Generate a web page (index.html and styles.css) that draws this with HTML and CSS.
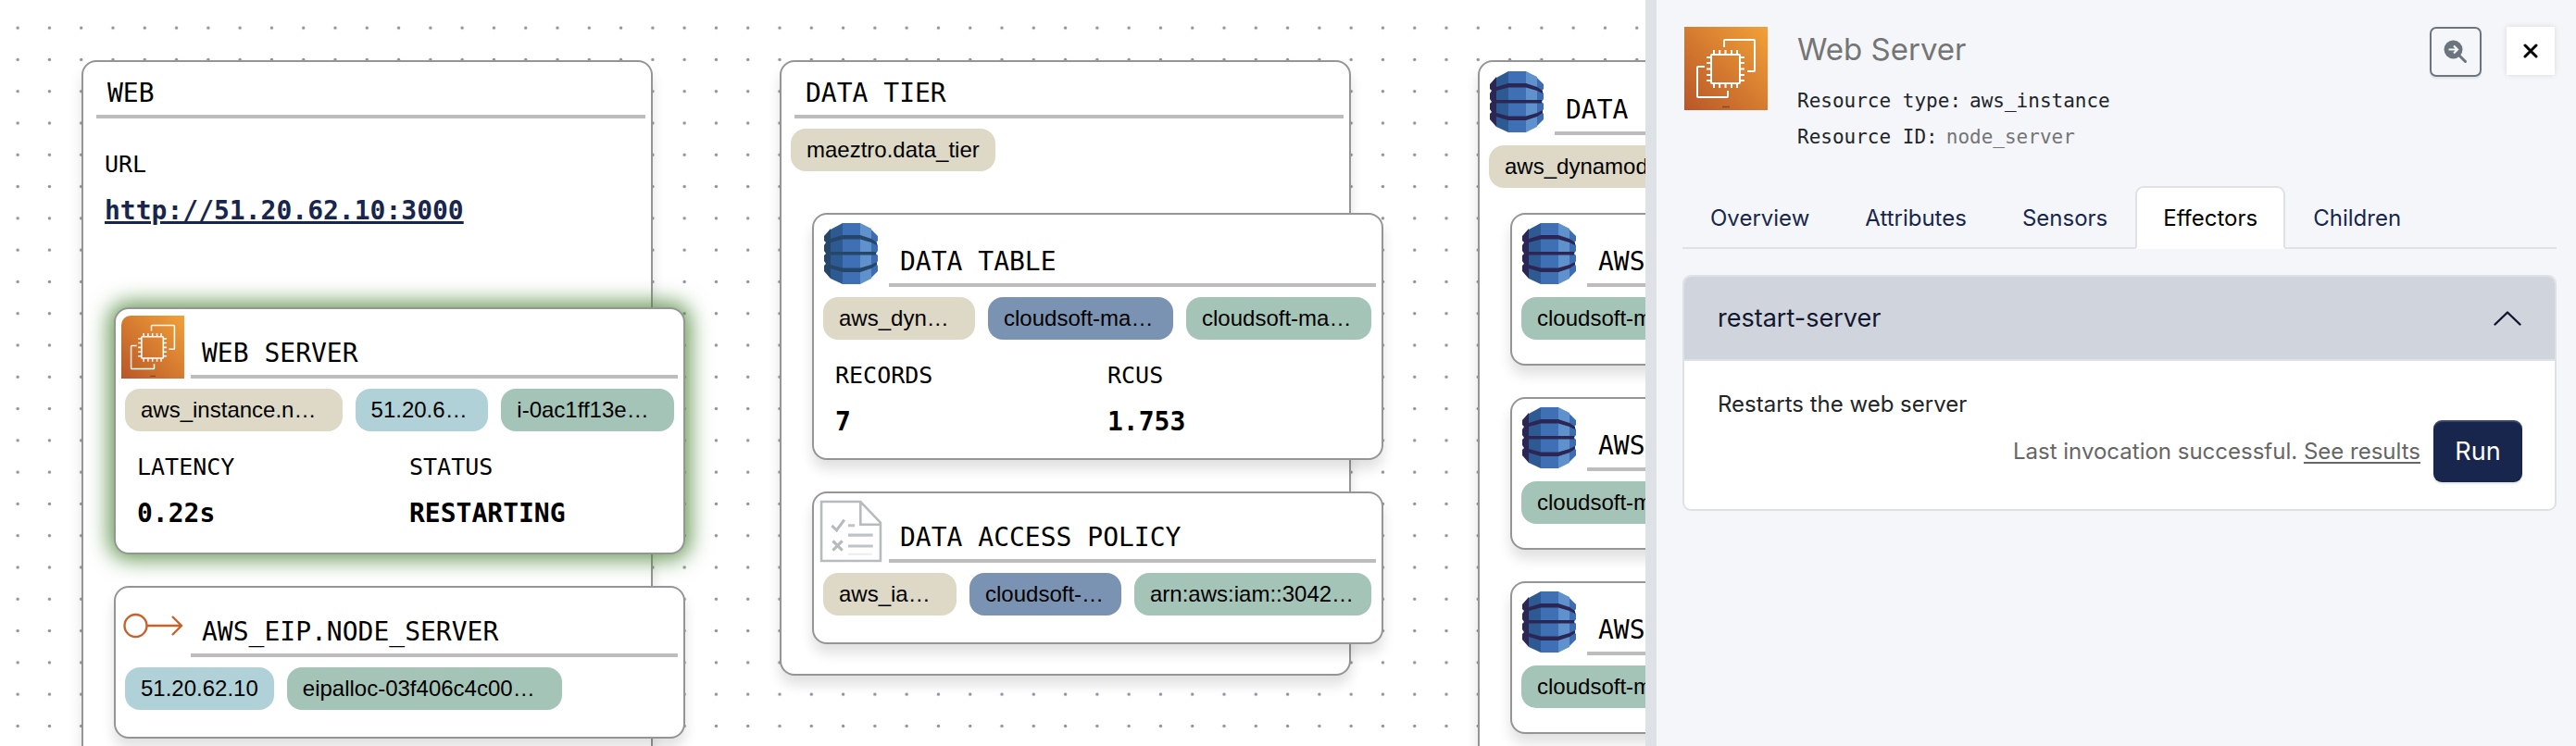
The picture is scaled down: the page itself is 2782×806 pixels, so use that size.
FILE: index.html
```html
<!DOCTYPE html>
<html lang="en">
<head>
<meta charset="utf-8">
<title>Blueprint topology</title>
<link rel="stylesheet" href="styles.css">
</head>
<body>
<svg class="defs" aria-hidden="true">
  <defs>
    <linearGradient id="orange" x1="0" y1="1" x2="1" y2="0">
      <stop offset="0" stop-color="#b95628"/><stop offset="1" stop-color="#f2a138"/>
    </linearGradient>
    <symbol id="ec2" viewBox="0 0 90 90">
      <rect width="90" height="90" fill="url(#orange)"/>
      <g fill="none" stroke="#fff" stroke-width="2">
        <rect x="29" y="30" width="31" height="31" rx="1"/>
        <path d="M32 30v-5M38.200 30v-5M44.500 30v-5M51 30v-5M57 30v-5M32 61v5M38.200 61v5M44.500 61v5M51 61v5M57 61v5M29 33h-5M29 39h-5M29 45.500h-5M29 52h-5M29 58h-5M60 33h5M60 39h5M60 45.500h5M60 52h5M60 58h5"/>
        <path d="M43 22v-7q0-1 1-1h31q1 0 1 1v32q0 1-1 1h-7M22 43h-7q-1 0-1 1v31q0 1 1 1h31q1 0 1-1v-6"/>
      </g>
      <path d="M41 86.500h8" stroke="#8a4a20" stroke-width="1.500"/>
    </symbol>
    <symbol id="dynamo" viewBox="0 0 58 66">
      <path d="M0 14l7-8V60l-7-8V46l2-2-2-3V35l2-2-2-3V24l2-3-2-2z" fill="var(--band)"/>
      <path d="M58 14l-7-7V59l7-7V46l-2-2 2-3V35l-2-2 2-3V24l-2-3 2-2z" fill="#3d6cb0"/>
      <path d="M7 7L20 0V66L7 60z" fill="#2e5a94"/>
      <path d="M20 0H39V66H20z" fill="#3f70b5"/>
      <path d="M39 0L51 6V60L39 66z" fill="#5f91cc"/>
      <path d="M2 20L7 17 20 13H39L51 17 57 21V24L51 21 39 17.500H20L7 21 2 23zM2 31H56V34.500H2zM2 43L7 45 20 48.500H39L51 45 57 42V45L51 49 39 53H20L7 49 2 46z" fill="var(--band)"/>
    </symbol>
    <symbol id="policy" viewBox="0 0 66 66">
      <path d="M2 2H43L64 24V64H2zM43 2V26H64" fill="none" stroke="#b6bbbd" stroke-width="2.500"/>
      <path d="M30 37H56M30 48.500H56M30 27H37" stroke="#c0c3c5" stroke-width="3"/>
      <path d="M30 57H55" stroke="#eceeee" stroke-width="2"/>
      <path d="M13 27l5 5 8-11M14 43l10 10M24 43l-10 10" fill="none" stroke="#b6bbbd" stroke-width="3"/>
    </symbol>
    <symbol id="eip" viewBox="0 0 68 68">
      <g fill="none" stroke="#c9622a" stroke-width="2.400">
        <circle cx="15.500" cy="34" r="12"/><path d="M28 34H65M55 24l10 10-10 10"/>
      </g>
    </symbol>
  </defs>
</svg>
<div class="app">
  <main class="canvas">
    <svg class="grid" aria-hidden="true">
      <defs><pattern id="dots" x="2" y="13" width="34.286" height="34.286" patternUnits="userSpaceOnUse"><circle cx="17.143" cy="17.143" r="1.700" fill="#90909a"/></pattern></defs>
      <rect width="100%" height="100%" fill="url(#dots)"/>
    </svg>

    <section class="node group web">
      <header class="head"><h2 class="title">WEB</h2></header>
      <dl class="url"><dt>URL</dt><dd><a href="#">http://51.20.62.10:3000</a></dd></dl>
      <article class="node card tall selected">
        <header class="head"><svg class="icon rounded"><use href="#ec2"/></svg><h3 class="title">WEB SERVER</h3></header>
        <ul class="pills">
          <li class="pill sand w235">aws_instance.n…</li><li class="pill sky w144">51.20.6…</li><li class="pill mint w187">i-0ac1ff13e…</li>
        </ul>
        <dl class="stats"><div><dt>LATENCY</dt><dd>0.22s</dd></div><div><dt>STATUS</dt><dd>RESTARTING</dd></div></dl>
      </article>
      <article class="node card">
        <header class="head"><svg class="icon"><use href="#eip"/></svg><h3 class="title">AWS_EIP.NODE_SERVER</h3></header>
        <ul class="pills"><li class="pill sky">51.20.62.10</li><li class="pill mint w297">eipalloc-03f406c4c00…</li></ul>
      </article>
    </section>

    <section class="node group data">
      <header class="head"><h2 class="title">DATA TIER</h2></header>
      <ul class="pills"><li class="pill sand">maeztro.data_tier</li></ul>
      <article class="node card table tall">
        <header class="head"><svg class="icon db navy"><use href="#dynamo"/></svg><h3 class="title">DATA TABLE</h3></header>
        <ul class="pills">
          <li class="pill sand w164">aws_dyn…</li><li class="pill blue w200">cloudsoft-ma…</li><li class="pill mint w200">cloudsoft-ma…</li>
        </ul>
        <dl class="stats"><div><dt>RECORDS</dt><dd>7</dd></div><div><dt>RCUS</dt><dd>1.753</dd></div></dl>
      </article>
      <article class="node card">
        <header class="head"><svg class="icon"><use href="#policy"/></svg><h3 class="title">DATA ACCESS POLICY</h3></header>
        <ul class="pills">
          <li class="pill sand w144">aws_ia…</li><li class="pill blue w164">cloudsoft-…</li><li class="pill mint w256">arn:aws:iam::3042…</li>
        </ul>
      </article>
    </section>

    <section class="node group tables">
      <header class="head iconed"><svg class="icon db"><use href="#dynamo"/></svg><h2 class="title">DATA</h2></header>
      <ul class="pills"><li class="pill sand w235">aws_dynamod</li></ul>
      <article class="node card table">
        <header class="head"><svg class="icon db"><use href="#dynamo"/></svg><h3 class="title">AWS</h3></header>
        <ul class="pills"><li class="pill mint w297">cloudsoft-m</li></ul>
      </article>
      <article class="node card table">
        <header class="head"><svg class="icon db"><use href="#dynamo"/></svg><h3 class="title">AWS</h3></header>
        <ul class="pills"><li class="pill mint w297">cloudsoft-m</li></ul>
      </article>
      <article class="node card table">
        <header class="head"><svg class="icon db"><use href="#dynamo"/></svg><h3 class="title">AWS</h3></header>
        <ul class="pills"><li class="pill mint w297">cloudsoft-m</li></ul>
      </article>
    </section>
  </main>

  <aside class="panel">
    <header class="summary">
      <svg class="logo"><use href="#ec2"/></svg>
      <div class="about">
        <h1 class="name">Web Server</h1>
        <p class="meta"><span>Resource type:</span><span>aws_instance</span></p>
        <p class="meta"><span>Resource ID:</span><span class="muted">node_server</span></p>
      </div>
      <div class="actions">
        <button class="zoom" type="button" aria-label="Zoom to node">
          <svg viewBox="0 0 26 26"><path d="M17 17l6.500 6.500" stroke="#6c757d" stroke-width="3" stroke-linecap="round"/><circle cx="10.500" cy="10.500" r="10" fill="#6c757d"/><path d="M5.500 10.500h9M11 6.500l4 4-4 4" fill="none" stroke="#f4f6fa" stroke-width="2.200"/></svg>
        </button>
        <button class="close" type="button" aria-label="Close">
          <svg viewBox="0 0 16 16"><path d="M2 2l12 12M14 2L2 14" stroke="#000" stroke-width="3" stroke-linecap="round"/></svg>
        </button>
      </div>
    </header>
    <nav class="tabs">
      <a class="tab" href="#">Overview</a><a class="tab" href="#">Attributes</a><a class="tab" href="#">Sensors</a><a class="tab active" href="#">Effectors</a><a class="tab" href="#">Children</a>
    </nav>
    <section class="accordion">
      <button class="toggle" type="button"><span>restart-server</span>
        <svg viewBox="0 0 30 16"><path d="M1.500 14.500L15 1.500l13.500 13" fill="none" stroke="#10172e" stroke-width="2.400" stroke-linecap="round" stroke-linejoin="round"/></svg>
      </button>
      <div class="body">
        <p class="text">Restarts the web server</p>
        <div class="run-row"><span>Last invocation successful. <a href="#">See results</a></span><button class="run" type="button">Run</button></div>
      </div>
    </section>
  </aside>
</div>
</body>
</html>
```
FILE: styles.css
```css
* { box-sizing: border-box; }
body { margin: 0; background: #fff; color: #000; }
h1, h2, h3, p, ul, dl, dd { margin: 0; padding: 0; font-weight: 400; }
.defs { position: absolute; width: 0; height: 0; }
.app { display: flex; height: 100vh; overflow: hidden; }

/* Diagram */
.canvas { position: relative; flex: 1; min-width: 0; overflow: hidden; font-family: "DejaVu Sans Mono", monospace; }
.grid { position: absolute; inset: 0; width: 100%; height: 100%; }
.node { width: 617px; background: #fff; border: 2px solid #959595; border-radius: 16px; box-shadow: 0 10px 14px rgba(0, 0, 0, .12); }
.group { position: absolute; top: 65px; padding-bottom: 32px; }
.web { left: 88px; }
.data { left: 842px; }
.tables { left: 1596px; }
.head { display: flex; align-items: flex-end; gap: 7px; padding: 0 6px 0 14px; height: 61px; }
.card .head { height: 75px; padding: 6px 6px 0 6px; }
.table .head { height: 78px; }
.iconed { height: 79px; padding: 6px 6px 0 6px; }
.title { flex: 1; border-bottom: 4px solid #bdbdbd; padding: 0 12px 7px; font-size: 28px; line-height: 32px; white-space: nowrap; }
.icon { flex: none; width: 68px; height: 68px; }
.rounded { border-top-left-radius: 10px; }
.db { --band: #2b2653; height: 66px; margin-bottom: 3px; }
.navy { --band: #254668; }
.pills { display: flex; gap: 14px; padding: 11px 10px 0; list-style: none; }
.pill { padding: 0 17px; border-radius: 16px; font: 24px/46px "Liberation Sans", Arial, sans-serif; white-space: nowrap; }
.sand { background: #ded8c6; }
.sky { background: #b1d1d9; }
.mint { background: #a5c4b8; }
.blue { background: #7b93b2; }
.w144 { width: 144px; }
.w164 { width: 164px; }
.w187 { width: 187px; }
.w200 { width: 200px; }
.w235 { width: 235px; }
.w256 { width: 256px; }
.w297 { width: 297px; }
.card { height: 165px; margin: 34px 0 0 33px; }
.tall { height: 267px; }
.group > .pills + .card { margin-top: 45px; }
.tables > .pills + .card { margin-top: 27px; }
.selected { box-shadow: 0 0 22px 6px rgba(72, 132, 52, .8); }
dt { font-size: 25px; line-height: 36px; }
dd { font-size: 28px; line-height: 36px; font-weight: 700; }
.stats { display: grid; grid-template-columns: 294px 1fr; padding: 21px 23px 0; }
.stats dd, .url dd { margin-top: 14px; }
.url { height: 170px; padding: 32px 23px 0; }
.url a { color: #18264d; text-decoration-thickness: 3px; }

/* Details panel */
.panel { flex: none; width: 36.125%; padding: 28px 21px 0 28px; border-left: 12px solid #dee2e6; background: #f4f6fa; font-family: Inter, sans-serif; color: #212529; }
.summary { display: flex; gap: 32px; padding: 1px 2px 0; }
.logo { width: 90px; height: 90px; flex: none; }
.about { flex: 1; }
.name { font-size: 33px; line-height: 48px; color: #757575; }
.meta { display: flex; gap: 9px; font: 21px/39px "DejaVu Sans Mono", monospace; }
.name + .meta { margin-top: 13px; }
.muted { color: #757575; }
.actions { display: flex; gap: 27px; align-items: flex-start; }
.zoom, .close { display: flex; align-items: center; justify-content: center; padding: 0; }
.zoom { width: 56px; height: 54px; border: 2px solid #6c757d; border-radius: 7px; background: none; box-shadow: 0 2px 2px rgba(0, 0, 0, .08); }
.zoom svg { width: 26px; height: 26px; }
.close { width: 52px; height: 52px; border: 0; background: #fff; box-shadow: 0 0 6px rgba(0, 0, 0, .12); }
.close svg { width: 16px; height: 16px; }
.tabs { display: flex; margin-top: 33px; border-bottom: 2px solid #dee2e6; }
.tab { padding: 16px 28px 14px; margin-bottom: -2px; border: 2px solid transparent; border-radius: 9px 9px 0 0; font-size: 24px; line-height: 34px; color: #18264d; text-decoration: none; }
.active { background: #fff; border-color: #dee2e6; border-bottom-color: #fff; color: #000; }
.accordion { margin-top: 28px; border: 2px solid #dee2e6; border-radius: 9px; background: #fff; overflow: hidden; }
.toggle { display: flex; justify-content: space-between; align-items: center; width: 100%; height: 91px; padding: 0 36px; border: 0; border-bottom: 2px solid #dee2e6; background: #d0d4dc; font: 27px/40px Inter, sans-serif; color: #10172e; }
.toggle svg { width: 30px; height: 16px; }
.body { padding: 30px 35px 29px 36px; font-size: 24px; line-height: 34px; }
.run-row { display: flex; justify-content: flex-end; align-items: center; gap: 14px; color: #666; }
.run-row a { color: inherit; text-underline-offset: 3px; text-decoration-thickness: 2px; }
.run { width: 96px; height: 67px; border: 0; border-radius: 9px; background: #18264d; color: #fff; font: 27px/40px Inter, sans-serif; box-shadow: inset 0 2px 0 rgba(255, 255, 255, .15), 0 2px 2px rgba(0, 0, 0, .1); }
```
